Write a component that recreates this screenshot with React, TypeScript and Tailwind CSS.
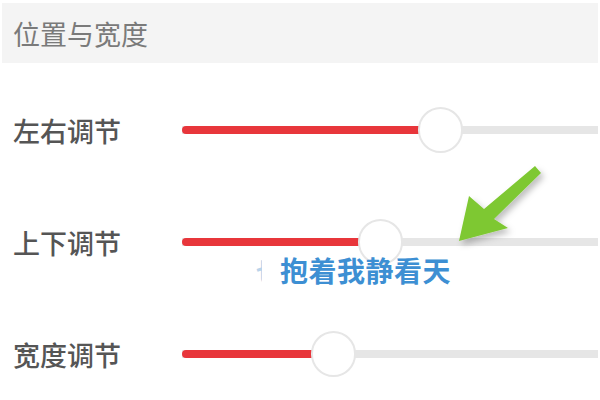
import React from "react";

const rows = [
  { label: "左右调节", value: 62 },
  { label: "上下调节", value: 47.6 },
  { label: "宽度调节", value: 36.3 },
];

function Slider({ value }: { value: number }) {
  return (
    <div className="relative flex-1 h-[46px] flex items-center mr-[2px]">
      <div className="w-full h-[8px] bg-[#e6e6e6] flex">
        <div className="h-full bg-[#e8363b] rounded-l-full" style={{ width: `${value}%` }} />
      </div>
      <div
        className="absolute top-0 w-[45px] h-[46px] -ml-[22px] rounded-full bg-white border-[2px] border-[#e6e6e6]"
        style={{ left: `${value}%` }}
      />
    </div>
  );
}

export default function App() {
  return (
    <div className="w-[600px] h-[400px] bg-white overflow-hidden relative font-['Noto_Sans_CJK_SC',sans-serif]">
      <div className="mt-[3px] mx-[2px] h-[60px] bg-[#f4f4f4] flex items-center pl-[11px]">
        <span className="text-[27px] text-[#7a7a7a] leading-none">位置与宽度</span>
      </div>
      <div className="pt-[11px] flex flex-col">
        {rows.map((row) => (
          <div key={row.label} className="h-[112px] flex items-center pl-[13px]">
            <span className="w-[169px] text-[27px] font-medium text-[#555555] leading-none">{row.label}</span>
            <Slider value={row.value} />
          </div>
        ))}
      </div>

      <div className="absolute left-[256px] top-[256px] flex items-center gap-[18px]">
        <span className="w-[6px] overflow-hidden text-[26px] font-bold text-[#b9d3ea] leading-none">也</span>
        <span className="text-[28px] font-bold text-[#3d8fd3] leading-none tracking-[0.5px]">抱着我静看天</span>
      </div>

      <svg className="absolute left-0 top-0" width="600" height="400" viewBox="0 0 600 400">
        <defs>
          <filter id="sh" x="-20%" y="-20%" width="140%" height="140%">
            <feDropShadow dx="3" dy="4" stdDeviation="3" floodColor="#000" floodOpacity="0.25" />
          </filter>
        </defs>
        <polygon
          points="459,241 469,196 484,209 535,166 541,173 494,219 508,228"
          fill="#7ec832"
          filter="url(#sh)"
        />
      </svg>
    </div>
  );
}
